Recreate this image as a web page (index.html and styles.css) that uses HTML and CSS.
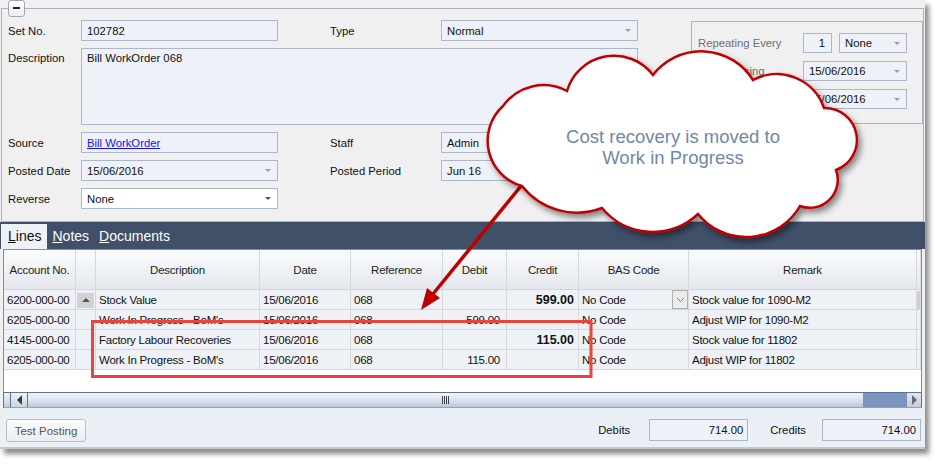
FILE: index.html
```html
<!DOCTYPE html>
<html lang="en">
<head>
  <meta charset="UTF-8" />
  <title>Journal Set 102782</title>
  <link rel="stylesheet" href="styles.css">
</head>
<body>

  <div class="window">
    <fieldset class="head">
      <legend><button class="collapse" title="Collapse"></button></legend>
      <div class="form">
        <div class="lbl c1">Set No.</div>
        <div class="field c2">102782</div>
        <div class="lbl c4">Type</div>
        <div class="field combo c5">Normal</div>

        <div class="repeat">
          <div class="rrow">
            <span class="rlabel">Repeating Every</span>
            <div class="field num">1</div>
            <div class="field combo every">None</div>
          </div>
          <div class="rrow">
            <span class="rlabel">Commencing</span>
            <div class="field combo date">15/06/2016</div>
          </div>
          <div class="rrow">
            <span class="rlabel">Ending</span>
            <div class="field combo date">15/06/2016</div>
          </div>
        </div>

        <div class="lbl c1 top">Description</div>
        <div class="field memo">Bill WorkOrder 068</div>

        <div class="lbl c1">Source</div>
        <div class="field c2"><a href="#">Bill WorkOrder</a></div>
        <div class="lbl c4">Staff</div>
        <div class="field c5">Admin</div>

        <div class="lbl c1">Posted Date</div>
        <div class="field combo c2">15/06/2016</div>
        <div class="lbl c4">Posted Period</div>
        <div class="field c5">Jun 16</div>

        <div class="lbl c1">Reverse</div>
        <div class="field combo live c2">None</div>
      </div>
    </fieldset>

    <div class="tabs">
      <div class="tab active"><u>L</u>ines</div>
      <div class="tab"><u>N</u>otes</div>
      <div class="tab"><u>D</u>ocuments</div>
    </div>

    <div class="grid">
      <table class="lines">
        <colgroup>
          <col class="w-acc"><col class="w-sel"><col class="w-desc"><col class="w-date"><col class="w-ref">
          <col class="w-dr"><col class="w-cr"><col class="w-bas"><col class="w-rem"><col class="w-end">
        </colgroup>
        <thead>
          <tr>
            <th>Account No.</th><th></th><th>Description</th><th>Date</th><th>Reference</th>
            <th>Debit</th><th>Credit</th><th>BAS Code</th><th>Remark</th><th></th>
          </tr>
        </thead>
        <tbody>
          <tr>
            <td>6200-000-00</td>
            <td class="sel"><span class="up"></span></td>
            <td>Stock Value</td><td>15/06/2016</td><td>068</td>
            <td class="num"></td><td class="num bold">599.00</td>
            <td class="bas"><div class="bas-in">No Code<span class="drop"><svg width="9" height="6" viewBox="0 0 9 6"><polyline points="1,1 4.5,4.5 8,1" fill="none" stroke="#777" stroke-width="1"/></svg></span></div></td>
            <td>Stock value for 1090-M2</td>
            <td class="end"><span class="vbar"></span></td>
          </tr>
          <tr>
            <td>6205-000-00</td><td class="sel"></td>
            <td>Work In Progress - BoM's</td><td>15/06/2016</td><td>068</td>
            <td class="num">599.00</td><td class="num"></td>
            <td class="bas">No Code</td><td>Adjust WIP for 1090-M2</td><td class="end"></td>
          </tr>
          <tr>
            <td>4145-000-00</td><td class="sel"></td>
            <td>Factory Labour Recoveries</td><td>15/06/2016</td><td>068</td>
            <td class="num"></td><td class="num bold">115.00</td>
            <td class="bas">No Code</td><td>Stock value for 11802</td><td class="end"></td>
          </tr>
          <tr>
            <td>6205-000-00</td><td class="sel"></td>
            <td>Work In Progress - BoM's</td><td>15/06/2016</td><td>068</td>
            <td class="num">115.00</td><td class="num"></td>
            <td class="bas">No Code</td><td>Adjust WIP for 11802</td><td class="end"></td>
          </tr>
        </tbody>
      </table>
    </div>

    <div class="hscroll">
      <div class="split"></div>
      <div class="sbtn left"><span class="tri-l"></span></div>
      <div class="thumb"><span class="grip"></span></div>
      <div class="track"></div>
      <div class="sbtn right"><span class="tri-r"></span></div>
    </div>

    <div class="footer">
      <button class="test">Test Posting</button>
      <div class="totals">
        <span class="tlabel">Debits</span>
        <div class="field total">714.00</div>
        <span class="tlabel cr">Credits</span>
        <div class="field total">714.00</div>
      </div>
    </div>
    <div class="edge"></div>
  </div>

  <!-- annotation drawn over the screenshot -->
  <svg class="notes" width="942" height="466" viewBox="0 0 942 466">
    <defs>
      <filter id="shadow" x="-10%" y="-10%" width="130%" height="140%">
        <feDropShadow dx="3" dy="4" stdDeviation="3" flood-color="#000" flood-opacity="0.45"/>
      </filter>
    </defs>
    <rect x="92.5" y="321.5" width="498.5" height="55" fill="none" stroke="#e5463e" stroke-width="3"/>
    <line x1="521" y1="186" x2="433" y2="294" stroke="#c00000" stroke-width="3.5"/>
    <polygon points="421,310 440,298 427,288" fill="#c00000"/>
    <path class="cloud" filter="url(#shadow)"
      d="M522,186
         A47,47 0 0 1 503,106
         A50,50 0 0 1 567,91
         A49,49 0 0 1 653,75
         A61,61 0 0 1 753,80
         A50,50 0 0 1 824,108
         A32,32 0 0 1 836,170
         A28,28 0 0 1 800,206
         A62,62 0 0 1 698,214
         A66,66 0 0 1 602,208
         A70,70 0 0 1 522,186 Z"/>
    <text class="cloud-text" x="673" y="143">Cost recovery is moved to</text>
    <text class="cloud-text" x="673" y="164">Work in Progress</text>
  </svg>

</body>
</html>
```

FILE: styles.css
```css
body {
  margin: 0;
  background: #fff;
  font-family: "Liberation Sans", Arial, sans-serif;
  font-size: 11.3px;
  color: #111;
  position: relative;
  width: 942px;
  height: 466px;
  overflow: hidden;
}

.window {
  width: 925px;
  height: 449px;
  background: #f0f0f0;
  box-shadow: 4px 5px 5px rgba(0,0,0,0.45);
  display: flex;
  flex-direction: column;
}

/* header group */
fieldset.head {
  margin: 0 0 0 1px;
  padding: 3px 0 12px 6px;
  width: 923px;
  box-sizing: border-box;
  min-width: 0;
  border: 1px solid #a7b2c3;
  flex: none;
}

fieldset.head legend {
  padding: 0;
  margin: 0;
  height: 17px;
}

.collapse {
  display: block;
  width: 17px;
  height: 17px;
  padding: 0;
  border: 1px solid #a3a9b3;
  border-radius: 3px;
  background: linear-gradient(#ffffff, #eceef2);
  position: relative;
}

.collapse::before {
  content: "";
  position: absolute;
  left: 4px;
  top: 6px;
  width: 7px;
  height: 2px;
  background: #222;
}

.form {
  display: grid;
  grid-template-columns: 73px 197px 52px 111px 197px 53px 232px;
  grid-template-rows: 21px 77px 21px 21px 21px;
  row-gap: 7px;
}

.c1 { grid-column: 1; }
.c2 { grid-column: 2; }
.c4 { grid-column: 4; }
.c5 { grid-column: 5; }

.lbl {
  display: flex;
  align-items: center;
  white-space: nowrap;
}

.lbl.top {
  align-items: flex-start;
  padding-top: 4px;
}

.field {
  box-sizing: border-box;
  height: 21px;
  border: 1px solid #abb7ca;
  background: #eef1f7;
  padding: 0 6px 0 5px;
  display: flex;
  align-items: center;
  white-space: nowrap;
  color: #111;
}

.field a {
  color: #1414e6;
}

.field.memo {
  grid-column: 2 / 6;
  height: 77px;
  align-items: flex-start;
  padding-top: 3px;
}

.combo::after {
  content: "";
  margin-left: auto;
  border-left: 3px solid transparent;
  border-right: 3px solid transparent;
  border-top: 3px solid #a897a8;
}

.combo.live {
  background: #fff;
}

.combo.live::after {
  border-top-color: #555;
}

/* repeating panel */
.repeat {
  grid-column: 7;
  grid-row: 1 / 3;
  align-self: start;
  margin-top: 1px;
  height: 103px;
  box-sizing: border-box;
  border: 1px solid #a7b4c8;
  padding: 11px 15px 0 6px;
  display: flex;
  flex-direction: column;
  gap: 8px;
}

.rrow {
  display: flex;
  align-items: center;
  height: 20px;
}

.rlabel {
  color: #6e6e6e;
  width: 105px;
  white-space: nowrap;
}

.repeat .field {
  height: 20px;
}

.field.num {
  width: 29px;
  justify-content: flex-end;
}

.field.every {
  width: 68px;
  margin-left: 7px;
}

.field.date {
  width: 104px;
}

/* tabs */
.tabs {
  flex: none;
  height: 27px;
  background: #405069;
  display: flex;
  align-items: flex-end;
  padding-left: 1px;
}

.tab {
  font-size: 14px;
  color: #fff;
  height: 25px;
  line-height: 24px;
  padding: 0 5px;
}

.tab.active {
  background: #eef2f8;
  color: #111;
  padding: 0 6px 0 7px;
}

/* lines grid */
.grid {
  flex: none;
  height: 143px;
  margin: 0 3px;
  box-sizing: border-box;
  border: 1px solid #878c95;
  border-bottom: none;
  background: #fff;
}

table.lines {
  table-layout: fixed;
  width: 917px;
  border-collapse: separate;
  border-spacing: 0;
  font-size: 11.5px;
  letter-spacing: -0.25px;
}

.w-acc { width: 72px; }
.w-sel { width: 20px; }
.w-desc { width: 164px; }
.w-date { width: 91px; }
.w-ref { width: 92px; }
.w-dr { width: 64px; }
.w-cr { width: 72px; }
.w-bas { width: 110px; }
.w-rem { width: 228px; }
.w-end { width: 4px; }

.lines th,
.lines td {
  box-sizing: border-box;
  border-right: 1px solid #d5d9df;
  border-bottom: 1px solid #d3d7dd;
  white-space: nowrap;
  overflow: hidden;
}

.lines th {
  height: 40px;
  font-weight: normal;
  color: #1d1d1d;
  background: linear-gradient(#fbfcfd, #e3e7ed);
  text-align: center;
}

.lines td {
  height: 20px;
  padding: 0 3px;
  background: #eef1f6;
}

.lines td.num {
  text-align: right;
  padding-right: 6px;
}

.lines td.bold {
  font-weight: bold;
  font-size: 12.5px;
  letter-spacing: 0;
  padding-right: 4px;
}

.lines td.sel,
.lines td.end {
  padding: 0;
}

.lines td.bas {
  padding-right: 0;
}

.up {
  display: block;
  width: 17px;
  height: 15px;
  margin: 1px 0 0 1px;
  background: #d2d2d2;
  position: relative;
}

.up::after {
  content: "";
  position: absolute;
  left: 5px;
  top: 5px;
  border-left: 4px solid transparent;
  border-right: 4px solid transparent;
  border-bottom: 4px solid #555;
}

.bas-in {
  display: flex;
  align-items: center;
  height: 19px;
}

.drop {
  margin-left: auto;
  width: 16px;
  height: 19px;
  box-sizing: border-box;
  border: 1px solid #b0b0b0;
  background: #ececec;
  display: flex;
  align-items: center;
  justify-content: center;
}

.vbar {
  display: block;
  width: 4px;
  height: 18px;
  background: #d0d0d0;
}

/* horizontal scrollbar */
.hscroll {
  flex: none;
  height: 16px;
  margin: 0 3px;
  box-sizing: border-box;
  border: 1px solid #5d7396;
  border-bottom-color: #8fa3bf;
  display: flex;
  background: #7a96bf;
}

.split {
  width: 6px;
  background: linear-gradient(#eef2f7, #c3cedd);
  border-right: 1px solid #5d7396;
}

.sbtn {
  display: flex;
  align-items: center;
  justify-content: center;
  background: linear-gradient(#f1f4f8, #c9d3e1);
}

.sbtn.left {
  width: 16px;
  border-right: 1px solid #5d7396;
}

.sbtn.right {
  width: 14px;
  background: linear-gradient(#dfe6ef, #c3cedd);
}

.tri-l {
  border-top: 5px solid transparent;
  border-bottom: 5px solid transparent;
  border-right: 5px solid #3a3a3a;
}

.tri-r {
  border-top: 5px solid transparent;
  border-bottom: 5px solid transparent;
  border-left: 5px solid #6a6a6a;
}

.thumb {
  flex: 0 0 835px;
  background: linear-gradient(#f0f3f8, #dde4ee 50%, #bac7d9);
  display: flex;
  align-items: center;
  justify-content: center;
}

.grip {
  width: 7px;
  height: 8px;
  background: repeating-linear-gradient(90deg, #444 0 1px, transparent 1px 2px);
}

.track {
  flex: 1;
}

/* footer */
.footer {
  flex: none;
  height: 39px;
  background: #ebeff6;
  display: flex;
  align-items: flex-start;
  padding: 11px 4px 0 6px;
  box-sizing: border-box;
}

.test {
  width: 80px;
  height: 23px;
  padding: 0;
  font-family: inherit;
  font-size: 11.5px;
  color: #555;
  border: 1px solid #b9bec6;
  border-radius: 3px;
  background: linear-gradient(#fdfdfe, #e9ecf1);
}

.totals {
  margin-left: auto;
  display: flex;
  align-items: center;
  height: 22px;
}

.tlabel {
  margin-right: 19px;
}

.tlabel.cr {
  margin-left: 22px;
  margin-right: 16px;
}

.field.total {
  width: 99px;
  height: 22px;
  justify-content: flex-end;
  padding-right: 4px;
}

.edge {
  flex: none;
  height: 2px;
  background: #c3c8cf;
}

/* annotation overlay */
.notes {
  position: absolute;
  left: 0;
  top: 0;
  pointer-events: none;
}

.cloud {
  fill: #fff;
  stroke: #c00000;
  stroke-width: 2.5;
  stroke-linejoin: miter;
}

.cloud-text {
  font-family: "Liberation Sans", Arial, sans-serif;
  font-size: 18.5px;
  fill: #6f88a9;
  text-anchor: middle;
}
```
